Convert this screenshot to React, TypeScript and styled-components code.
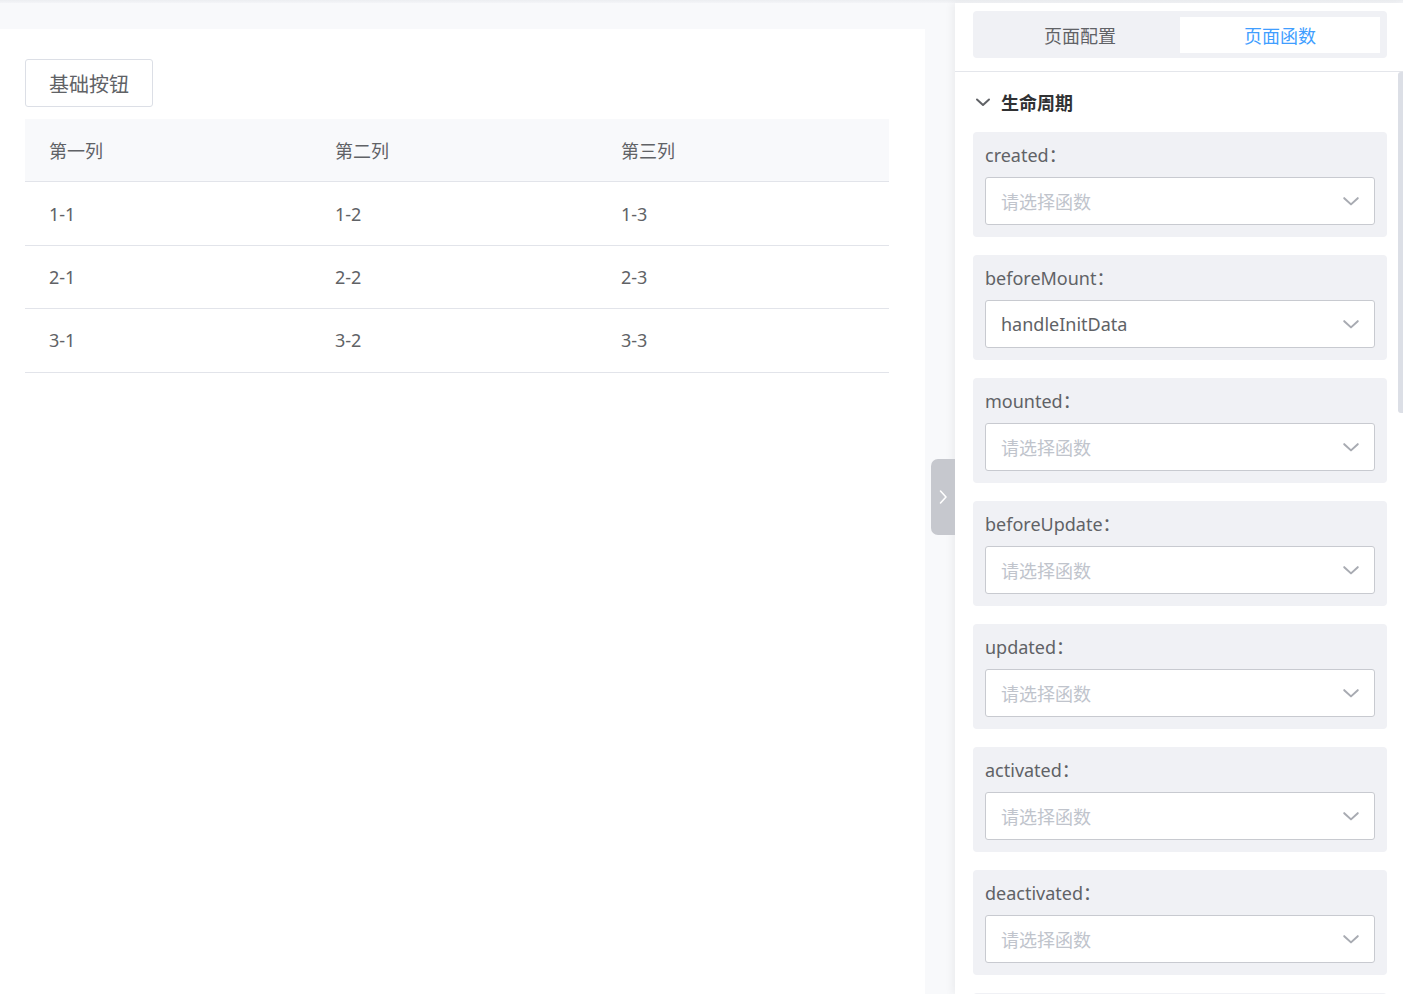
import React from "react";
import styled, { createGlobalStyle } from "styled-components";

const Global = createGlobalStyle`
  html, body { margin: 0; padding: 0; }
  body {
    background: #f8f9fb;
    font-family: "Noto Sans", "Noto Sans CJK SC", sans-serif;
    overflow: hidden;
  }
  * { box-sizing: border-box; }
`;

const Page = styled.div`
  width: 1403px;
  height: 994px;
  display: flex;
  flex-direction: column;
  overflow: hidden;
`;

const TopShade = styled.div`
  height: 3px;
  flex: none;
  background: linear-gradient(#eceef1, #f4f5f8);
`;

const Main = styled.div`
  flex: 1;
  display: flex;
  min-height: 0;
`;

const Workspace = styled.div`
  flex: 1;
  padding: 26px 30px 0 0;
  display: flex;
`;

const Canvas = styled.div`
  flex: 1;
  background: #ffffff;
  padding: 30px 36px 0 25px;
`;

const BaseButton = styled.button`
  height: 48px;
  padding: 0 23px;
  border: 1px solid #dcdfe6;
  border-radius: 3px;
  background: #fff;
  color: #606266;
  font-family: "Noto Sans CJK SC", sans-serif;
  font-size: 20px;
  cursor: pointer;
`;

const Table = styled.div`
  margin-top: 12px;
  display: grid;
  grid-template-columns: 286px 286px 1fr;
`;

const Cell = styled.div<{ $head?: boolean }>`
  height: 63.4px;
  display: flex;
  align-items: center;
  padding-left: 24px;
  font-size: 18px;
  color: #606266;
  font-family: "Noto Sans", "Noto Sans CJK SC", sans-serif;
  background: ${(p) => (p.$head ? "#f8f9fb" : "#fff")};
  border-bottom: 1px solid #e2e4ea;
`;

const Panel = styled.aside`
  width: 448px;
  flex: none;
  background: #fff;
  position: relative;
  display: flex;
  flex-direction: column;
  box-shadow: -3px 0 8px rgba(0, 0, 0, 0.05);
`;

const ToggleTab = styled.div`
  position: absolute;
  left: -24px;
  top: 456px;
  width: 24px;
  height: 76px;
  background: #c6c8ce;
  border-radius: 7px 0 0 7px;
  display: flex;
  align-items: center;
  justify-content: center;
`;

const PanelHead = styled.div`
  height: 69px;
  flex: none;
  padding: 8px 16px 0 18px;
  border-bottom: 1px solid #e4e6eb;
`;

const Tabs = styled.div`
  height: 47px;
  background: #f0f1f5;
  border-radius: 4px;
  padding: 6px 7px 5px;
  display: flex;
`;

const Tab = styled.div<{ $active?: boolean }>`
  flex: 1;
  display: flex;
  align-items: center;
  justify-content: center;
  font-family: "Noto Sans CJK SC", sans-serif;
  font-size: 18px;
  color: ${(p) => (p.$active ? "#409eff" : "#606266")};
  background: ${(p) => (p.$active ? "#fff" : "transparent")};
`;

const Scroll = styled.div`
  flex: 1;
  position: relative;
  padding: 0 16px 0 18px;
  display: flex;
  flex-direction: column;
  gap: 18px;
  overflow: hidden;
`;

const ScrollThumb = styled.div`
  position: absolute;
  right: 0;
  top: 0;
  width: 5px;
  height: 341px;
  background: #dcdfe6;
  border-radius: 3px 0 0 3px;
`;

const SectionTitle = styled.div`
  height: 60px;
  flex: none;
  margin-bottom: -18px;
  display: flex;
  align-items: center;
  gap: 10px;
  padding-left: 2px;
  font-family: "Noto Sans CJK SC", sans-serif;
  font-weight: 700;
  font-size: 18px;
  color: #303133;
`;

const Card = styled.div`
  flex: none;
  min-height: 105px;
  background: #f0f1f5;
  border-radius: 4px;
  padding: 12px;
`;

const Label = styled.div`
  height: 22px;
  line-height: 22px;
  margin-bottom: 11px;
  font-size: 18px;
  color: #606266;
  font-family: "Noto Sans", "Noto Sans CJK SC", sans-serif;
`;

const Select = styled.div`
  height: 48px;
  background: #fff;
  border: 1px solid #c8cad0;
  border-radius: 3px;
  display: flex;
  align-items: center;
  justify-content: space-between;
  padding: 0 14px 0 15px;
`;

const SelectText = styled.span<{ $placeholder?: boolean }>`
  font-size: 18px;
  color: ${(p) => (p.$placeholder ? "#c0c4cc" : "#606266")};
  font-family: "Noto Sans", "Noto Sans CJK SC", sans-serif;
`;

const Chevron = ({ color, size = 16, dir = "down", stroke = 2 }: { color: string; size?: number; dir?: "down" | "right"; stroke?: number }) => (
  <svg width={size} height={size} viewBox="0 0 16 16" fill="none">
    {dir === "down" ? (
      <path d="M2 5.5 L8 11 L14 5.5" stroke={color} strokeWidth={stroke} strokeLinecap="round" strokeLinejoin="round" />
    ) : (
      <path d="M5.5 2 L11 8 L5.5 14" stroke={color} strokeWidth={stroke} strokeLinecap="round" strokeLinejoin="round" />
    )}
  </svg>
);

const rows = [
  ["1-1", "1-2", "1-3"],
  ["2-1", "2-2", "2-3"],
  ["3-1", "3-2", "3-3"],
];

const hooks: { name: string; value?: string }[] = [
  { name: "created" },
  { name: "beforeMount", value: "handleInitData" },
  { name: "mounted" },
  { name: "beforeUpdate" },
  { name: "updated" },
  { name: "activated" },
  { name: "deactivated" },
];

export default function App() {
  return (
    <Page>
      <Global />
      <TopShade />
      <Main>
        <Workspace>
          <Canvas>
            <BaseButton>基础按钮</BaseButton>
            <Table>
              {["第一列", "第二列", "第三列"].map((h) => (
                <Cell key={h} $head>
                  {h}
                </Cell>
              ))}
              {rows.flat().map((c) => (
                <Cell key={c}>{c}</Cell>
              ))}
            </Table>
          </Canvas>
        </Workspace>
        <Panel>
          <ToggleTab>
            <Chevron color="#ffffff" dir="right" size={16} stroke={1.6} />
          </ToggleTab>
          <PanelHead>
            <Tabs>
              <Tab>页面配置</Tab>
              <Tab $active>页面函数</Tab>
            </Tabs>
          </PanelHead>
          <Scroll>
            <ScrollThumb />
            <SectionTitle>
              <Chevron color="#606266" size={16} stroke={2} />
              生命周期
            </SectionTitle>
            {hooks.map((h) => (
              <Card key={h.name}>
                <Label>{h.name}：</Label>
                <Select>
                  <SelectText $placeholder={!h.value}>{h.value ?? "请选择函数"}</SelectText>
                  <Chevron color="#a8abb2" size={18} stroke={1.8} />
                </Select>
              </Card>
            ))}
            <Card aria-hidden />
          </Scroll>
        </Panel>
      </Main>
    </Page>
  );
}
